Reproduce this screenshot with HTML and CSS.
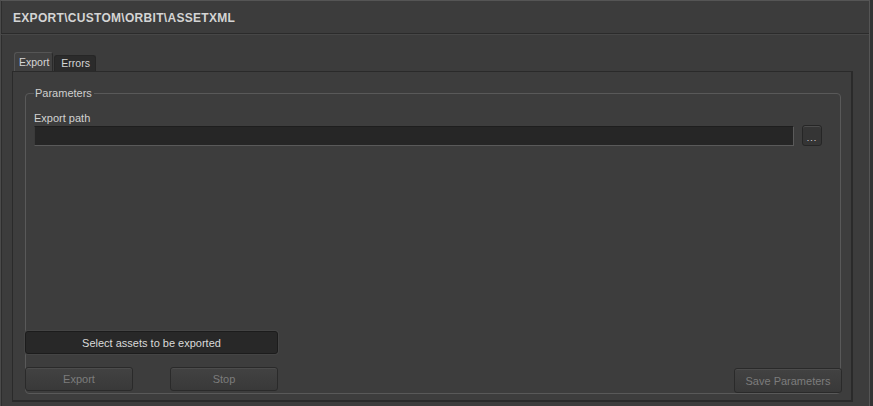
FILE: index.html
```html
<!DOCTYPE html>
<html lang="en">
<head>
	<meta charset="UTF-8">
	<title>Export</title>
	<link rel="stylesheet" href="styles.css">
</head>
<body>
	<div class="window">
		<div class="window__title">EXPORT\CUSTOM\ORBIT\ASSETXML</div>
		<div class="window__body">
			<div class="tabs">
				<span class="tabs__tab tabs__tab--active">Export</span>
				<span class="tabs__tab">Errors</span>
			</div>
			<div class="panel">
				<fieldset class="group">
					<legend class="group__legend">Parameters</legend>
					<label class="group__label" for="path">Export path</label>
					<div class="group__row">
						<input class="field" id="path" type="text">
						<button class="button button--browse">...</button>
					</div>
					<div class="group__spacer"></div>
					<button class="button button--select">Select assets to be exported</button>
					<div class="actions">
						<button class="button button--action" disabled>Export</button>
						<button class="button button--action actions__stop" disabled>Stop</button>
						<button class="button button--action actions__save" disabled>Save Parameters</button>
					</div>
				</fieldset>
			</div>
		</div>
	</div>
</body>
</html>
```

FILE: styles.css
```css
body {
	margin: 0;
	background: #333;
	font-family: "Liberation Sans", Arial, sans-serif;
	font-size: 11px;
	color: #d2d2d2;
}

.window {
	box-sizing: border-box;
	width: 870px;
	height: 406px;
	display: flex;
	flex-direction: column;
	background: #3c3c3c;
	border-top: 1px solid #555;
	border-left: 1px solid #4a4a4a;
	border-right: 1px solid #555;
	box-shadow: inset 1px 0 0 #2e2e2e;
}

.window__title {
	height: 32px;
	line-height: 34px;
	padding-left: 12px;
	font-weight: bold;
	font-size: 12px;
	letter-spacing: 0.3px;
	color: #d4d4d4;
	border-bottom: 1px solid #2b2b2b;
	box-shadow: 0 1px 0 #474747;
}

.window__body {
	flex: 1;
	display: flex;
	flex-direction: column;
	padding: 18px 16px 4px 11px;
}

.tabs {
	display: flex;
	align-items: flex-end;
	height: 19px;
	padding-left: 2px;
}
.tabs__tab {
	box-sizing: border-box;
	height: 16px;
	line-height: 15px;
	padding: 0 5px 0 6px;
	background: #2b2b2b;
	border: 1px solid #262626;
	border-bottom: none;
	border-radius: 3px 3px 0 0;
	color: #d6d6d6;
	font-size: 10.5px;
}
.tabs__tab--active {
	height: 19px;
	line-height: 18px;
	padding: 0 3px 0 4px;
	background: #404040;
	border-color: #555 #2a2a2a #2a2a2a #555;
	margin-right: 1px;
}

.panel {
	flex: 1;
	display: flex;
	flex-direction: column;
	background: #3d3d3d;
	border: 1px solid #2a2a2a;
	border-right-width: 2px;
	border-bottom-width: 2px;
	padding: 15px 10px 6px 12px;
}

.group {
	flex: 1;
	display: flex;
	flex-direction: column;
	margin: 0;
	padding: 0;
	min-width: 0;
	border: 1px solid #595959;
	border-radius: 4px;
}
.group__legend {
	margin-left: 8px;
	padding: 0 2px 0 1px;
	line-height: 13px;
	color: #cfcfcf;
}
.group__label {
	margin: 12px 0 0 8px;
	line-height: 13px;
}
.group__row {
	display: flex;
	align-items: center;
	margin: 0 18px 0 8px;
}
.group__spacer {
	flex: 1;
}

.field {
	flex: 1;
	box-sizing: border-box;
	height: 20px;
	margin: 0 8px 0 0;
	background: #262626;
	border: 1px solid #5a5a5a;
	border-top-color: #1e1e1e;
	border-left-color: #3a3a3a;
	outline: none;
	color: #ddd;
	font: inherit;
}

.button {
	box-sizing: border-box;
	font: inherit;
	color: #d2d2d2;
	background: linear-gradient(#424242, #393939);
	border: 1px solid #2a2a2a;
	border-radius: 3px;
	box-shadow: inset 0 1px 0 #4c4c4c;
	padding: 0;
	cursor: pointer;
}
.button:disabled {
	color: #7c7c7c;
	cursor: default;
}
.button--browse {
	width: 20px;
	height: 21px;
	line-height: 24px;
	background: #353535;
	border-color: #262626;
	letter-spacing: 1px;
	font-size: 9px;
	color: #e0e0e0;
}
.button--select {
	width: 253px;
	height: 23px;
	margin: 0 0 13px -1px;
	background: #282828;
	border-color: #1c1c1c;
	box-shadow: 0 0 0 1px #444;
	color: #dadada;
}
.button--action {
	width: 108px;
	height: 24px;
}

.actions {
	display: flex;
	align-items: flex-end;
	margin: 0 -2px 0 -1px;
}
.actions > .button:first-child,
.actions__stop {
	margin-bottom: 2px;
}
.actions__stop {
	margin-left: 37px;
}
.actions__save {
	margin-left: auto;
	height: 25px;
}
```
